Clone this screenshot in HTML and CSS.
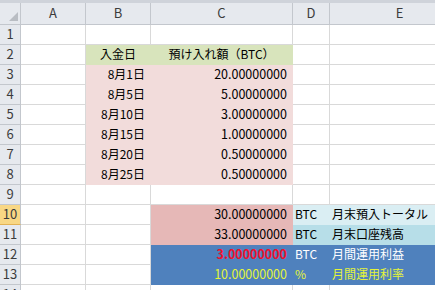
FILE: index.html
```html
<!DOCTYPE html>
<html lang="ja">
<head>
    <meta charset="UTF-8">
    <title>入金記録</title>
    <link rel="stylesheet" href="styles.css">
</head>
<body>
    <div class="topbar"></div>
    <div class="sheet">
        <div class="row head">
            <div class="corner"><span class="tri"></span></div>
            <div class="colhead">A</div>
            <div class="colhead">B</div>
            <div class="colhead">C</div>
            <div class="colhead">D</div>
            <div class="colhead">E</div>
        </div>
        <div class="row">
            <div class="rowhead">1</div>
            <div class="cell"></div><div class="cell"></div><div class="cell"></div><div class="cell"></div><div class="cell"></div>
        </div>
        <div class="row">
            <div class="rowhead">2</div>
            <div class="cell"></div>
            <div class="cell green center">入金日</div>
            <div class="cell green center">預け入れ額（BTC）</div>
            <div class="cell"></div><div class="cell"></div>
        </div>
        <div class="row">
            <div class="rowhead">3</div>
            <div class="cell"></div>
            <div class="cell pink right">8月1日</div>
            <div class="cell pink right num">20.00000000</div>
            <div class="cell"></div><div class="cell"></div>
        </div>
        <div class="row">
            <div class="rowhead">4</div>
            <div class="cell"></div>
            <div class="cell pink right">8月5日</div>
            <div class="cell pink right num">5.00000000</div>
            <div class="cell"></div><div class="cell"></div>
        </div>
        <div class="row">
            <div class="rowhead">5</div>
            <div class="cell"></div>
            <div class="cell pink right">8月10日</div>
            <div class="cell pink right num">3.00000000</div>
            <div class="cell"></div><div class="cell"></div>
        </div>
        <div class="row">
            <div class="rowhead">6</div>
            <div class="cell"></div>
            <div class="cell pink right">8月15日</div>
            <div class="cell pink right num">1.00000000</div>
            <div class="cell"></div><div class="cell"></div>
        </div>
        <div class="row">
            <div class="rowhead">7</div>
            <div class="cell"></div>
            <div class="cell pink right">8月20日</div>
            <div class="cell pink right num">0.50000000</div>
            <div class="cell"></div><div class="cell"></div>
        </div>
        <div class="row">
            <div class="rowhead">8</div>
            <div class="cell"></div>
            <div class="cell pink right">8月25日</div>
            <div class="cell pink right num">0.50000000</div>
            <div class="cell"></div><div class="cell"></div>
        </div>
        <div class="row">
            <div class="rowhead">9</div>
            <div class="cell"></div><div class="cell"></div><div class="cell"></div><div class="cell"></div><div class="cell"></div>
        </div>
        <div class="row">
            <div class="rowhead active">10</div>
            <div class="cell"></div><div class="cell"></div>
            <div class="cell rose right num">30.00000000</div>
            <div class="cell sky">BTC</div>
            <div class="cell sky">月末預入トータル</div>
        </div>
        <div class="row">
            <div class="rowhead">11</div>
            <div class="cell"></div><div class="cell"></div>
            <div class="cell rose right num">33.00000000</div>
            <div class="cell aqua">BTC</div>
            <div class="cell aqua">月末口座残高</div>
        </div>
        <div class="row">
            <div class="rowhead">12</div>
            <div class="cell"></div><div class="cell"></div>
            <div class="cell blue right num red">3.00000000</div>
            <div class="cell blue white">BTC</div>
            <div class="cell blue white">月間運用利益</div>
        </div>
        <div class="row">
            <div class="rowhead">13</div>
            <div class="cell"></div><div class="cell"></div>
            <div class="cell blue right num yellow">10.00000000</div>
            <div class="cell blue yellow">%</div>
            <div class="cell blue yellow">月間運用利率</div>
        </div>
        <div class="row last">
            <div class="rowhead">14</div>
            <div class="cell"></div><div class="cell"></div><div class="cell"></div><div class="cell"></div><div class="cell"></div>
        </div>
    </div>
</body>
</html>
```

FILE: styles.css
```css
* {
    box-sizing: border-box;
}
html,
body {
    height: 290px;
    overflow: hidden;
}
body {
    margin: 0;
    background-color: #ffffff;
    font-family: "Noto Sans CJK JP", "Noto Sans", sans-serif;
    font-size: 12px;
    color: #000000;
}
.topbar {
    height: 3px;
    background-color: #cfd3da;
}
.sheet {
    width: 435px;
    overflow: hidden;
}
.row {
    display: grid;
    grid-template-columns: 21px 65px 65px 142px 37px 140px;
    height: 20px;
}
.row.head {
    height: 22px;
}
.row.last {
    height: 5px;
    overflow: hidden;
}
/* Header cells */
.corner,
.colhead,
.rowhead {
    background-color: #e6e9ee;
    border-right: 1px solid #c3c7cd;
    border-bottom: 1px solid #c3c7cd;
    color: #3c3c3c;
    text-align: center;
}
.colhead {
    font-size: 13px;
    line-height: 20px;
}
.rowhead {
    font-size: 13px;
    line-height: 17px;
}
.rowhead.active {
    background-color: #f8d784;
    border-bottom-color: #e2b254;
}
.corner {
    position: relative;
}
.tri {
    position: absolute;
    right: 2px;
    bottom: 3px;
    width: 0;
    height: 0;
    border-left: 9px solid transparent;
    border-bottom: 9px solid #b9bdc3;
}
/* Cells */
.cell {
    border-right: 1px solid #d9d9d9;
    border-bottom: 1px solid #d9d9d9;
    line-height: 17px;
    padding: 0 2px;
    white-space: nowrap;
}
.center {
    text-align: center;
}
.right {
    text-align: right;
    padding-right: 5px;
}
.num {
    font-size: 12.5px;
}
.green {
    background-color: #d8e4bc;
    border-color: #d8e4bc;
}
.pink {
    background-color: #f2dcdb;
    border-color: #f2dcdb;
}
.rose {
    background-color: #e6b8b7;
    border-color: #e6b8b7;
}
.sky {
    background-color: #daeef3;
    border-color: #daeef3;
}
.aqua {
    background-color: #b7dee8;
    border-color: #b7dee8;
}
.blue {
    background-color: #4f81bd;
    border-color: #4f81bd;
}
.red {
    color: #f0102c;
    font-weight: bold;
}
.white {
    color: #ffffff;
}
.yellow {
    color: #e4f43a;
}
```
